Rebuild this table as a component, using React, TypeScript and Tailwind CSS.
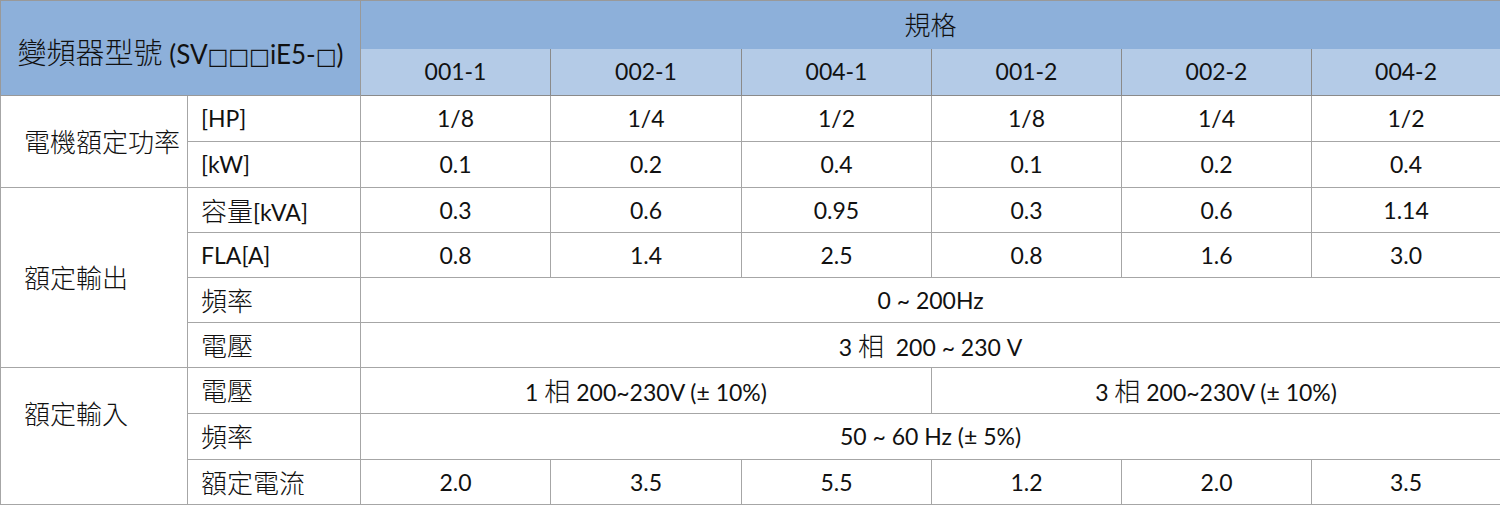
const cjk = "font-['Noto_Sans_CJK_TC',sans-serif] font-light text-[26px] leading-none";

const Z = ({ children }: { children: React.ReactNode }) => <span className={cjk}>{children}</span>;

const Box = () => (
  <span className="font-['DejaVu_Sans',sans-serif] text-[22px] leading-none">□</span>
);

const models = ["001-1", "002-1", "004-1", "001-2", "002-2", "004-2"];

const cell = "border border-[#a6a6a6] text-center align-middle p-0";
const label = "border border-[#a6a6a6] text-left align-middle pl-[13px] pr-0 py-0";

const Vals = ({ v }: { v: string[] }) => (
  <>
    {v.map((x, i) => (
      <td key={i} className={cell}>
        {x}
      </td>
    ))}
  </>
);

export default function App() {
  return (
    <div className="w-[1500px] h-[505px] bg-white">
      <table className="table-fixed border-collapse w-[1500px] text-[23px] leading-none text-[#111] font-['Lato','Noto_Sans_CJK_TC',sans-serif]">
        <colgroup>
          <col className="w-[187px]" />
          <col className="w-[173px]" />
          <col className="w-[190px]" />
          <col className="w-[191px]" />
          <col className="w-[190px]" />
          <col className="w-[190px]" />
          <col className="w-[190px]" />
          <col className="w-[189px]" />
        </colgroup>
        <thead>
          <tr className="h-[48px]">
            <th
              rowSpan={2}
              colSpan={2}
              className="border border-[#999] bg-[#8db0da] font-normal text-center align-middle pt-[8px] text-[26px]"
            >
              <span className="font-['Noto_Sans_CJK_TC',sans-serif] font-light text-[29px] leading-none">變頻器型號</span> (SV
              <Box />
              <Box />
              <Box />
              iE5-
              <Box />)
            </th>
            <th
              colSpan={6}
              className="border border-[#999] border-b-0 bg-[#8db0da] font-normal text-center align-middle"
            >
              <Z>規格</Z>
            </th>
          </tr>
          <tr className="h-[47px]">
            {models.map((m) => (
              <th
                key={m}
                className="border border-[#8a8a8a] border-t-0 bg-[#b4cbe7] font-normal text-center align-middle"
              >
                {m}
              </th>
            ))}
          </tr>
        </thead>
        <tbody>
          <tr className="h-[46px]">
            <td rowSpan={2} className="border border-[#a6a6a6] text-left align-middle pl-[23px]">
              <Z>電機額定功率</Z>
            </td>
            <td className={label}>[HP]</td>
            <Vals v={["1/8", "1/4", "1/2", "1/8", "1/4", "1/2"]} />
          </tr>
          <tr className="h-[46px]">
            <td className={label}>[kW]</td>
            <Vals v={["0.1", "0.2", "0.4", "0.1", "0.2", "0.4"]} />
          </tr>
          <tr className="h-[45px]">
            <td rowSpan={4} className="border border-[#a6a6a6] text-left align-middle pl-[23px]">
              <Z>額定輸出</Z>
            </td>
            <td className={label}>
              <Z>容量</Z>[kVA]
            </td>
            <Vals v={["0.3", "0.6", "0.95", "0.3", "0.6", "1.14"]} />
          </tr>
          <tr className="h-[45px]">
            <td className={label}>FLA[A]</td>
            <Vals v={["0.8", "1.4", "2.5", "0.8", "1.6", "3.0"]} />
          </tr>
          <tr className="h-[45px]">
            <td className={label}>
              <Z>頻率</Z>
            </td>
            <td colSpan={6} className={cell}>
              0 ~ 200Hz
            </td>
          </tr>
          <tr className="h-[45px]">
            <td className={label}>
              <Z>電壓</Z>
            </td>
            <td colSpan={6} className={cell}>
              3 <Z>相</Z>&nbsp; 200 ~ 230 V
            </td>
          </tr>
          <tr className="h-[46px]">
            <td rowSpan={3} className="border border-[#a6a6a6] text-left align-middle pl-[23px] pb-[46px]">
              <Z>額定輸入</Z>
            </td>
            <td className={label}>
              <Z>電壓</Z>
            </td>
            <td colSpan={3} className={cell}>
              1 <Z>相</Z> 200~230V (± 10%)
            </td>
            <td colSpan={3} className={cell}>
              3 <Z>相</Z> 200~230V (± 10%)
            </td>
          </tr>
          <tr className="h-[46px]">
            <td className={label}>
              <Z>頻率</Z>
            </td>
            <td colSpan={6} className={cell}>
              50 ~ 60 Hz (± 5%)
            </td>
          </tr>
          <tr className="h-[45px]">
            <td className={label}>
              <Z>額定電流</Z>
            </td>
            <Vals v={["2.0", "3.5", "5.5", "1.2", "2.0", "3.5"]} />
          </tr>
        </tbody>
      </table>
    </div>
  );
}
